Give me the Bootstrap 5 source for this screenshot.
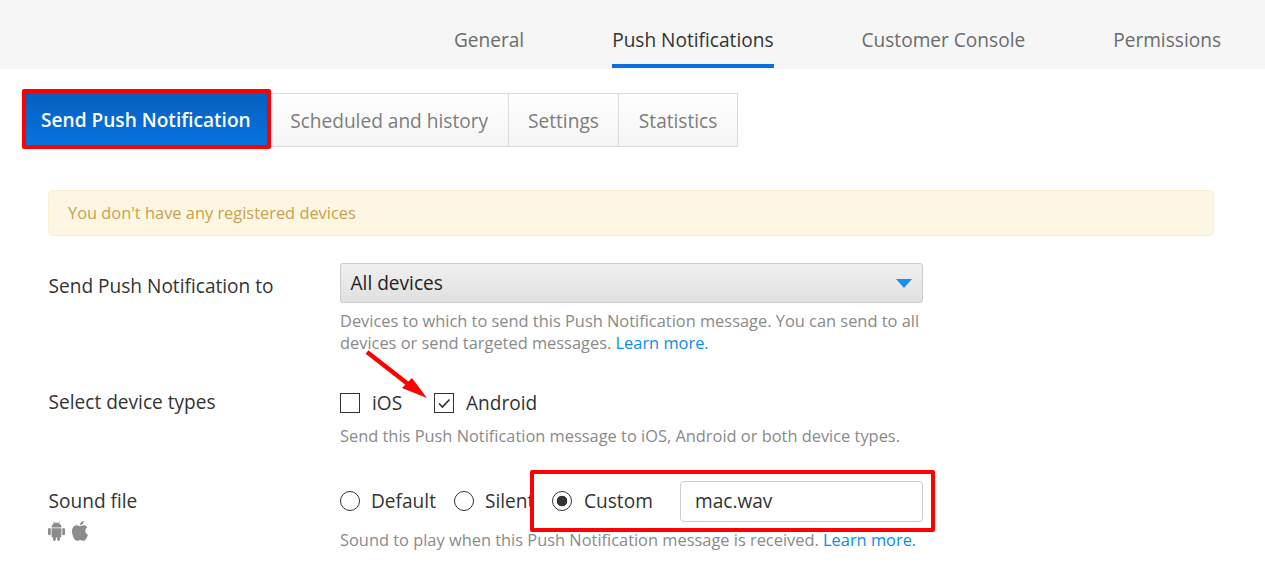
<!DOCTYPE html>
<html lang="en"><head><meta charset="utf-8"><title>Push Notifications</title>
<link rel="stylesheet" href="https://cdn.jsdelivr.net/npm/bootstrap@5.3.0/dist/css/bootstrap.min.css">
<style>
html,body{height:568px;overflow:hidden}
body{font-family:"Open Sans","Noto Sans",sans-serif;color:#333;background:#fff;position:relative}
.topbar{height:69px;background:#f6f6f6;padding-right:44px;gap:88px}
.toplink{font-size:19.1px;line-height:26px;color:#6b6b6b;text-decoration:none;height:69px;padding-top:27px;display:block}
.toplink.on{color:#333;border-bottom:4px solid #0a6fdc;height:68px}
.subtabs{padding:24px 0 0 26px;height:121px}
.subtab{font-size:19.1px;height:54px;line-height:54px;padding:0 19.5px;border:1px solid #dcdcdc;border-left:0;color:#7d7d7d;background:linear-gradient(#fff,#f5f5f5);text-decoration:none}
.subtab.first{margin:-4px 0 -2px -4px;height:60px;line-height:54px;padding:0 16px 0 15px;background:linear-gradient(#0560c0,#0a72de);border:4px solid #f00;border-radius:2px;color:#fff;font-weight:600;position:relative}
.warnbox{margin:0 51px 27px 48px;height:46px;background:#fdf6e3;border:1px solid #f8efd2;border-radius:5px;padding:0 19px;font-size:16.4px;line-height:44px;color:#c8a24f}
.frow{padding-left:48.500px;font-size:19.1px}
.flabel{width:291.500px;flex:none;color:#333}
.fctl{width:583px;flex:none}
.selbox{height:40px;border:1px solid #ccc;border-radius:3px;background:linear-gradient(#f0f0f0,#e0e0e0);padding:0 10px 0 9.500px;line-height:38px;font-size:19.100px;color:#222}
.caretd{width:0;height:0;border-left:8px solid transparent;border-right:8px solid transparent;border-top:9px solid #1a90ef}
.hint{font-size:16.400px;line-height:22px;color:#8a8a8a;margin:7px 0 0}
.hint a{color:#0a8cee;text-decoration:none}
.rowa{height:116px}.rowb{height:99px}
.labela{padding-top:9px}
.opt{font-size:19.100px;line-height:26px;color:#333}
.box{width:20px;height:20px;border:1px solid #333;background:#fff;display:block;flex:none}
.dot{width:20px;height:20px;border:1px solid #333;border-radius:50%;display:block;background:#fff;flex:none}
.dot.sel{background:radial-gradient(circle,#333 0,#333 5px,#fff 5.600px)}
.t1{margin-left:12px;width:62px;flex:none}
.t2{margin-left:11px;width:83px;flex:none}
.clip{margin-left:11px;width:45px;overflow:hidden;white-space:nowrap;flex:none}
.redbox{width:405px;height:62px;border:4px solid #f00;border-radius:2px;background:#fff;margin:-3px 0;padding:0 8px 0 18px;flex:none}
.soundin{width:243px;height:41px;border:1px solid #ccc;border-radius:4px;padding:0 14px;line-height:39px;font-size:19.100px;color:#333;margin-left:auto}
.arrowmark{position:absolute;left:360px;top:345px;width:75px;height:60px}
.optrow{height:26px;margin-top:11px;align-items:center}
.optrow2{height:52px;margin-top:-3px}
.hint2{margin-top:9px}
.hint3{margin-top:2px}
.osicons{margin-top:5px;margin-left:-1px;gap:7px}
</style></head><body>
<nav class="d-flex justify-content-end topbar">
<a class="toplink" href="#">General</a><a class="toplink on" href="#">Push Notifications</a><a class="toplink" href="#">Customer Console</a><a class="toplink" href="#">Permissions</a>
</nav>
<div class="d-flex align-items-start subtabs">
<a class="subtab first" href="#">Send Push Notification</a><a class="subtab" href="#">Scheduled and history</a><a class="subtab" href="#">Settings</a><a class="subtab" href="#">Statistics</a>
</div>
<div class="warnbox">You don't have any registered devices</div>
<div class="d-flex frow rowa">
<div class="flabel labela">Send Push Notification to</div>
<div class="fctl">
<div class="selbox d-flex justify-content-between align-items-center"><span>All devices</span><span class="caretd"></span></div>
<p class="hint">Devices to which to send this Push Notification message. You can send to all devices or send targeted messages. <a href="#">Learn more.</a></p>
</div></div>
<div class="d-flex frow rowb">
<div class="flabel labela">Select device types</div>
<div class="fctl">
<div class="d-flex opt optrow">
<span class="box"></span><span class="t1">iOS</span>
<span class="box"><svg class="d-block" width="18" height="18" viewBox="0 0 18 18"><path d="M4 9.500l3.500 3.500 7-7.500" fill="none" stroke="#333" stroke-width="1.700"/></svg></span><span class="t1">Android</span>
</div>
<p class="hint hint2">Send this Push Notification message to iOS, Android or both device types.</p>
</div></div>
<div class="d-flex frow">
<div class="flabel labela">Sound file
<div class="d-flex osicons">
<svg width="17" height="20" viewBox="0 0 17 20" fill="#8c8c8c"><path d="M5.500.5l1.300 2.200M11.500.5L10.200 2.700" stroke="#8c8c8c" stroke-width=".8" fill="none"/><path d="M3.600 6.400C3.600 3.700 5.800 1.800 8.500 1.800s4.900 1.900 4.900 4.600z"/><path d="M3.600 7.300h9.800v8.200a1 1 0 0 1-1 1H4.600a1 1 0 0 1-1-1z"/><rect x="0" y="7" width="2.800" height="7.300" rx="1.400"/><rect x="14.200" y="7" width="2.800" height="7.300" rx="1.400"/><rect x="5" y="15" width="2.800" height="5" rx="1.400"/><rect x="9.200" y="15" width="2.800" height="5" rx="1.400"/></svg>
<svg width="16" height="20" viewBox="0 0 16 20" fill="#8c8c8c"><path d="M11.800 0c.1 2.200-1.700 4.200-3.800 4.100C7.800 2 9.700.2 11.800 0zM8 5.200c1 0 2.100-1 3.700-1 1.500 0 2.900.8 3.700 2-3 1.800-2.500 6.200.6 7.500-.9 2.500-2.500 6.100-4.400 6.100-1.300 0-1.800-.9-3.400-.9s-2.200.9-3.500.9C2.800 19.800 0 14.700 0 10.300c0-3.700 2.300-6 4.600-6C6 4.300 7.100 5.200 8 5.200z"/></svg>
</div></div>
<div class="fctl">
<div class="d-flex align-items-center opt optrow2">
<span class="dot"></span><span class="t2">Default</span>
<span class="dot"></span><span class="clip">Silent</span>
<div class="redbox d-flex align-items-center"><span class="dot sel"></span><span class="ms-2 ps-1">Custom</span><div class="soundin">mac.wav</div></div>
</div>
<p class="hint hint3">Sound to play when this Push Notification message is received. <a href="#">Learn more.</a></p>
</div></div>
<svg class="arrowmark" viewBox="0 0 75 60"><path d="M7 7L48 39" stroke="#f00" stroke-width="4.500" fill="none"/><path d="M67 53L42 43L52 33z" fill="#f00"/></svg>
</body></html>
